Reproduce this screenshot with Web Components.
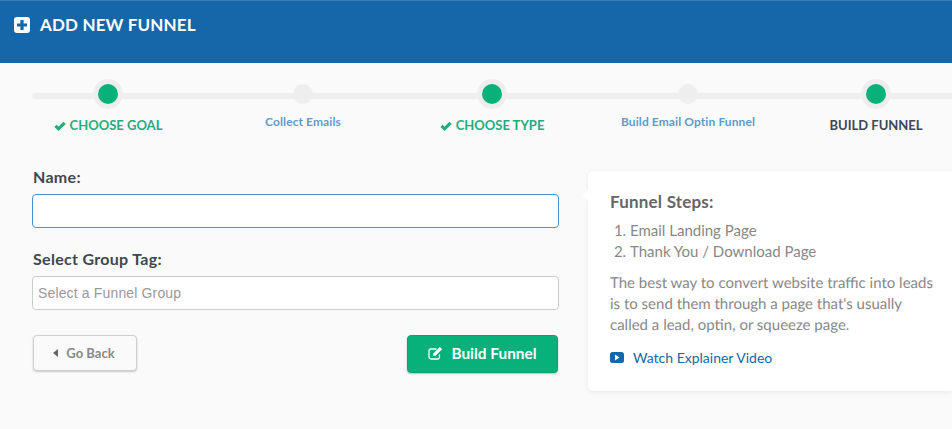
<!DOCTYPE html>
<html>
<head>
<meta charset="utf-8">
<title>Add New Funnel</title>
<style>
  html, body { margin: 0; height: 100%; }
  body {
    width: 952px; height: 429px; overflow: hidden;
    background: #fafafa;
    font-family: Lato, "Liberation Sans", sans-serif;
  }
  .content {
    display: grid;
    grid-template-columns: 527px 364px;
    column-gap: 29px;
    padding: 0 0 0 32px;
    margin-top: 22px;
    align-items: start;
  }
</style>
</head>
<body>
<page-header>ADD NEW FUNNEL</page-header>
<step-bar>
  <step-item state="done" style="--w:192px">CHOOSE GOAL</step-item>
  <step-item state="sub" style="--w:198px">Collect Emails</step-item>
  <step-item state="done" style="--w:180px">CHOOSE TYPE</step-item>
  <step-item state="sub" style="--w:212px">Build Email Optin Funnel</step-item>
  <step-item state="current" style="--w:164px">BUILD FUNNEL</step-item>
</step-bar>
<div class="content">
  <funnel-form></funnel-form>
  <info-panel></info-panel>
</div>

<script>
class PageHeader extends HTMLElement {
  constructor() {
    super();
    this.attachShadow({ mode: "open" });
    this.shadowRoot.innerHTML = `
      <style>
        :host {
          display: flex; align-items: flex-start; gap: 10px;
          padding: 16px 0 0 14px; box-sizing: border-box;
          height: 63px;
          background: #1667a9;
          border-top: 1px solid #3b7fb8;
          color: #fff;
          font-size: 17px; font-weight: 700; line-height: 16px;
          letter-spacing: .15px;
        }
        svg { width: 16px; height: 16px; display: block; }
      </style>
      <svg viewBox="0 0 16 16"><rect width="16" height="16" rx="3" fill="#fff"/><path d="M6.400 3h3.200v3.400H13v3.200H9.600V13H6.400V9.600H3V6.400h3.400z" fill="#1667a9"/></svg>
      <span><slot></slot></span>`;
  }
}
customElements.define("page-header", PageHeader);

class StepBar extends HTMLElement {
  constructor() {
    super();
    this.attachShadow({ mode: "open" });
    this.shadowRoot.innerHTML = `
      <style>
        :host {
          display: flex; position: relative;
          margin-left: 12px; padding-top: 16px;
          width: 946px;
        }
        :host::before {
          content: ""; position: absolute;
          left: 20px; right: 0; top: 30px; height: 6px;
          border-radius: 3px 0 0 3px;
          background: #eeeeee;
        }
      </style>
      <slot></slot>`;
  }
}
customElements.define("step-bar", StepBar);

class StepItem extends HTMLElement {
  constructor() {
    super();
    this.attachShadow({ mode: "open" });
    this.shadowRoot.innerHTML = `
      <style>
        :host {
          display: flex; flex-direction: column; align-items: center;
          position: relative;
          width: var(--w); flex: none;
          font-weight: 700;
          white-space: nowrap;
        }
        .ring {
          width: 30px; height: 30px; border-radius: 50%;
          background: #eeeeee;
          display: flex; align-items: center; justify-content: center;
        }
        .dot { width: 20px; height: 20px; border-radius: 50%; background: #08b07a; }
        .label {
          display: flex; align-items: center; gap: 4px;
          margin-top: 8px; height: 17px;
          font-size: 13px; line-height: 17px; color: #21ad7c;
        }
        svg { width: 12px; height: 10px; display: block; overflow: visible; }
        :host([state="current"]) .label { color: #3f4750; }
        :host([state="sub"]) .ring { width: 20px; height: 20px; margin: 5px 0; }
        :host([state="sub"]) .dot { display: none; }
        :host([state="sub"]) .label { font-size: 12px; letter-spacing: .1px; color: #5f9acb; margin-top: 4px; }
      </style>
      <div class="ring"><div class="dot"></div></div>
      <div class="label"><svg viewBox="0 0 12 10"><path d="M1.500 4.800 4.600 7.800 10.600 1.800" fill="none" stroke="#21ad7c" stroke-width="3.200"/></svg><span><slot></slot></span></div>`;
    if (this.getAttribute("state") !== "done") this.shadowRoot.querySelector("svg").remove();
  }
}
customElements.define("step-item", StepItem);

class FunnelForm extends HTMLElement {
  constructor() {
    super();
    this.attachShadow({ mode: "open" });
    this.shadowRoot.innerHTML = `
      <style>
        :host { display: block; padding-top: 11px; }
        label {
          display: block; font-size: 16px; font-weight: 700; line-height: 19px;
          letter-spacing: .3px;
          color: #3f4750; margin: 0 0 8px 1px;
        }
        .box {
          display: block; width: 100%; height: 34px; box-sizing: border-box;
          background: #fff; border: 1px solid #cccccc; border-radius: 4px;
          padding: 0 5px; margin-bottom: 21px;
          font: 14px/32px "Liberation Sans", sans-serif; letter-spacing: .15px; color: #999;
        }
        .box.focus { border-color: #4a90d9; }
        .actions {
          display: flex; justify-content: space-between; align-items: flex-start;
          padding-left: 1px; margin-top: 25px; padding-right: 1px;
        }
        button {
          display: flex; align-items: center; justify-content: center;
          box-sizing: border-box; border-radius: 4px;
          font-family: inherit; font-weight: 700; cursor: pointer;
        }
        .back {
          width: 104px; height: 36px; gap: 8px; padding: 0 2px 0 0;
          background: #fafafa; border: 1px solid #cfcfcf; color: #888;
          font-size: 13px; box-shadow: 0 1px 2px rgba(0,0,0,.2);
        }
        .back svg { width: 5px; height: 8px; }
        .go {
          width: 151px; height: 38px; gap: 8px; padding: 0 0 3px;
          background: #08b07a; border: 1px solid #07a470; color: #fff;
          font-size: 15.400px; box-shadow: 0 1px 2px rgba(0,0,0,.25);
        }
        .go svg { width: 15px; height: 14px; }
      </style>
      <label>Name:</label>
      <div class="box focus"></div>
      <label>Select Group Tag:</label>
      <div class="box">Select a Funnel Group</div>
      <div class="actions">
        <button class="back"><svg viewBox="0 0 5 8"><path d="M5 0 0 4l5 4z" fill="#666"/></svg>Go Back</button>
        <button class="go"><svg viewBox="0 0 15 14"><path d="M11.500 8.500V11a2 2 0 0 1-2 2H3a2 2 0 0 1-2-2V5a2 2 0 0 1 2-2h5.500" fill="none" stroke="#fff" stroke-width="1.300"/><path d="M5.500 7.200 11.800.9l2.300 2.300-6.300 6.300-2.800.5z" fill="#fff"/></svg>Build Funnel</button>
      </div>`;
  }
}
customElements.define("funnel-form", FunnelForm);

class InfoPanel extends HTMLElement {
  constructor() {
    super();
    this.attachShadow({ mode: "open" });
    this.shadowRoot.innerHTML = `
      <style>
        :host {
          display: block; position: relative; box-sizing: border-box;
          height: 220px; padding: 20px 0 0 22px;
          margin-top: 15px;
          background: #fff; border-radius: 5px 0 0 5px;
          box-shadow: 0 1px 4px rgba(0,0,0,.08);
          color: #888; font-size: 14.500px; line-height: 21px;
        }
        :host::before {
          content: ""; position: absolute; left: -4px; top: 20px;
          width: 9px; height: 9px; background: #fff; transform: rotate(45deg);
        }
        h3 { margin: 0 0 8px; font-size: 17px; letter-spacing: .2px; line-height: 21px; font-weight: 700; color: #666; position: relative; }
        ol { margin: 0 0 11px; padding: 0 0 0 20px; font-size: 15px; }
        p { margin: 0 0 11px; font-size: 15px; text-rendering: geometricPrecision; }
        a { display: flex; align-items: center; gap: 9px; color: #1667a9; text-decoration: none; font-size: 14px; }
        svg { width: 14px; height: 11px; display: block; }
      </style>
      <h3>Funnel Steps:</h3>
      <ol><li>Email Landing Page</li><li>Thank You / Download Page</li></ol>
      <p>The best way to convert website traffic into leads<br>is to send them through a page that's usually<br>called a lead, optin, or squeeze page.</p>
      <a href="#"><svg viewBox="0 0 14 11"><rect width="14" height="11" rx="2.500" fill="#1667a9"/><path d="M5 2.500v6l4.500-3z" fill="#fff"/></svg>Watch Explainer Video</a>`;
  }
}
customElements.define("info-panel", InfoPanel);
</script>
</body>
</html>
